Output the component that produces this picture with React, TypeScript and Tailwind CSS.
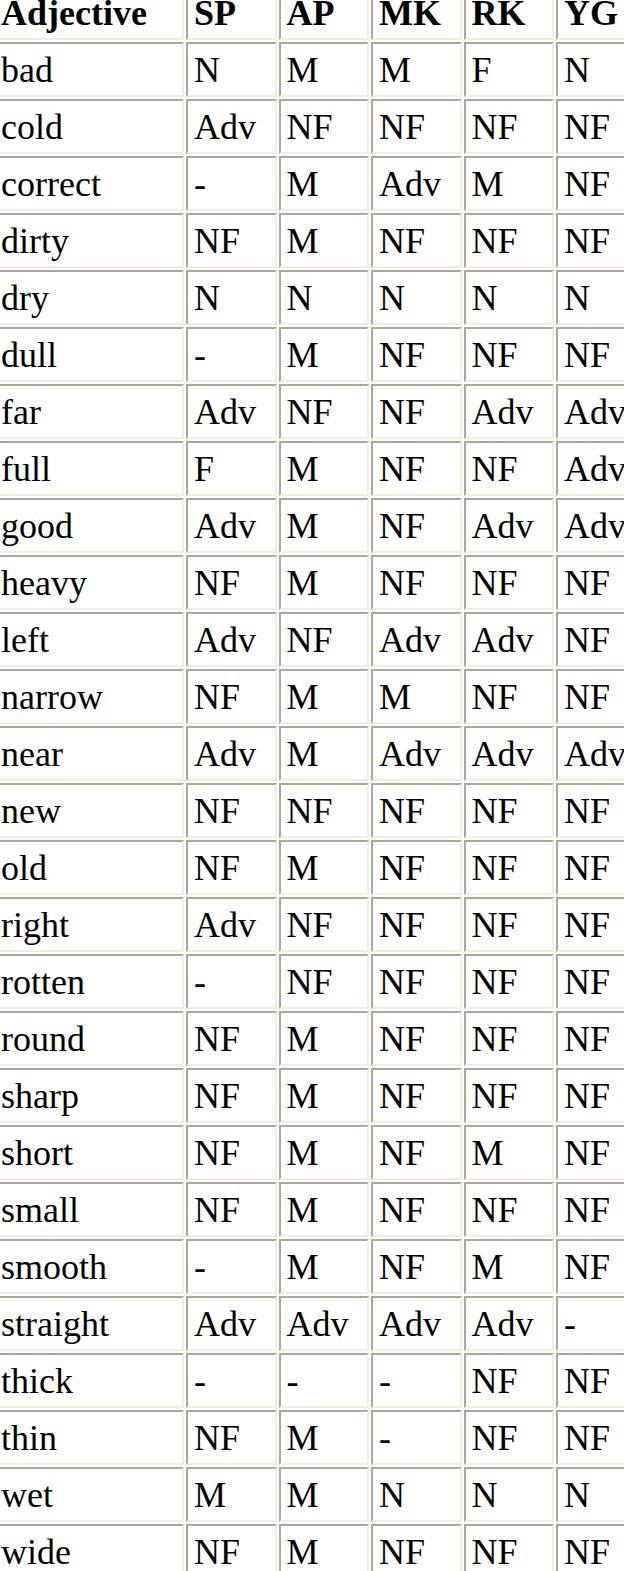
import React from 'react';

const headers = ['Adjective', 'SP', 'AP', 'MK', 'RK', 'YG'];

const rows: string[][] = [
  ['bad', 'N', 'M', 'M', 'F', 'N'],
  ['cold', 'Adv', 'NF', 'NF', 'NF', 'NF'],
  ['correct', '-', 'M', 'Adv', 'M', 'NF'],
  ['dirty', 'NF', 'M', 'NF', 'NF', 'NF'],
  ['dry', 'N', 'N', 'N', 'N', 'N'],
  ['dull', '-', 'M', 'NF', 'NF', 'NF'],
  ['far', 'Adv', 'NF', 'NF', 'Adv', 'Adv'],
  ['full', 'F', 'M', 'NF', 'NF', 'Adv'],
  ['good', 'Adv', 'M', 'NF', 'Adv', 'Adv'],
  ['heavy', 'NF', 'M', 'NF', 'NF', 'NF'],
  ['left', 'Adv', 'NF', 'Adv', 'Adv', 'NF'],
  ['narrow', 'NF', 'M', 'M', 'NF', 'NF'],
  ['near', 'Adv', 'M', 'Adv', 'Adv', 'Adv'],
  ['new', 'NF', 'NF', 'NF', 'NF', 'NF'],
  ['old', 'NF', 'M', 'NF', 'NF', 'NF'],
  ['right', 'Adv', 'NF', 'NF', 'NF', 'NF'],
  ['rotten', '-', 'NF', 'NF', 'NF', 'NF'],
  ['round', 'NF', 'M', 'NF', 'NF', 'NF'],
  ['sharp', 'NF', 'M', 'NF', 'NF', 'NF'],
  ['short', 'NF', 'M', 'NF', 'M', 'NF'],
  ['small', 'NF', 'M', 'NF', 'NF', 'NF'],
  ['smooth', '-', 'M', 'NF', 'M', 'NF'],
  ['straight', 'Adv', 'Adv', 'Adv', 'Adv', '-'],
  ['thick', '-', '-', '-', 'NF', 'NF'],
  ['thin', 'NF', 'M', '-', 'NF', 'NF'],
  ['wet', 'M', 'M', 'N', 'N', 'N'],
  ['wide', 'NF', 'M', 'NF', 'NF', 'NF'],
];

const cell =
  'h-[55px] border-2 border-t-[#aca899] border-l-[#aca899] border-b-[#f1efe2] border-r-[#f1efe2] pl-[6px] pt-[6.5px] leading-[40px] whitespace-nowrap overflow-hidden';

export default function App() {
  return (
    <div className="w-[624px] h-[1571px] overflow-hidden bg-white">
      <div
        className="grid grid-cols-[191px_repeat(5,90.5px)] gap-[2px] -ml-[7px] -mt-[15.5px] text-[36px] text-black"
        style={{ fontFamily: '"Liberation Serif", "Times New Roman", serif' }}
      >
        {headers.map((h) => (
          <div key={h} className={`${cell} font-bold`}>
            {h}
          </div>
        ))}
        {rows.map((r) =>
          r.map((v, i) => (
            <div key={r[0] + i} className={cell}>
              {v}
            </div>
          ))
        )}
      </div>
    </div>
  );
}
